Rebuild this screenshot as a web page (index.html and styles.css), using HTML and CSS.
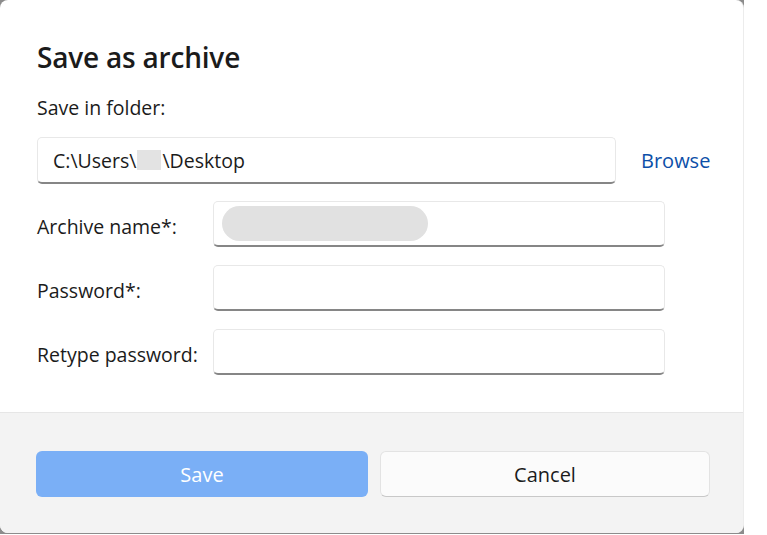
FILE: index.html
```html
<!DOCTYPE html>
<html>
<head>
<meta charset="utf-8">
<link rel="stylesheet" href="styles.css">
</head>
<body>
<div class="frame">
  <div class="dialog">
    <div class="content">
      <h1 class="title">Save as archive</h1>
      <div class="label-top">Save in folder:</div>
      <div class="folder-row">
        <div class="field folder-field">C:\Users\<span class="redact"></span>\Desktop</div>
        <a class="browse">Browse</a>
      </div>
      <div class="form-grid">
        <div class="label">Archive name*:</div>
        <div class="field"><span class="pill"></span></div>
        <div class="label">Password*:</div>
        <div class="field"></div>
        <div class="label">Retype password:</div>
        <div class="field"></div>
      </div>
    </div>
    <div class="footer">
      <button class="btn primary">Save</button>
      <button class="btn secondary">Cancel</button>
    </div>
  </div>
</div>
</body>
</html>
```
FILE: styles.css
```css
html, body {
  margin: 0;
  padding: 0;
  background: #ffffff;
}
body {
  font-family: "Open Sans", "Noto Sans", sans-serif;
  color: #1b1b1b;
}
.frame {
  width: 744px;
  height: 534px;
  background: #8c8c8c;
}
.dialog {
  box-sizing: border-box;
  width: 744px;
  height: 533px;
  background: #ffffff;
  border-radius: 8px;
  border-right: 1px solid #ececec;
  overflow: hidden;
  display: flex;
  flex-direction: column;
}
.content {
  flex: 1;
  padding: 0 0 0 37px;
  border-bottom: 1px solid #e6e6e6;
}
.title {
  margin: 39px 0 0 0;
  font-size: 28px;
  font-weight: 600;
  line-height: 36px;
  letter-spacing: -0.2px;
}
.label-top {
  margin-top: 20px;
  font-size: 19.5px;
  line-height: 26px;
}
.folder-row {
  margin-top: 16px;
  display: flex;
  align-items: center;
}
.field {
  box-sizing: border-box;
  height: 46px;
  background: #fff;
  border: 1px solid #e8e8e8;
  border-bottom: 2px solid #868686;
  border-radius: 5px;
  display: flex;
  align-items: center;
  font-size: 19.5px;
  padding-left: 15px;
}
.folder-field {
  width: 579px;
  height: 47px;
}
.redact {
  display: inline-block;
  width: 24px;
  height: 20px;
  background: #e3e3e3;
  margin: 0 1px;
}
.browse {
  margin-left: 25px;
  color: #0c4fa8;
  font-size: 20px;
}
.form-grid {
  margin-top: 17px;
  display: grid;
  grid-template-columns: 176px 452px;
  row-gap: 18px;
  align-items: center;
}
.label {
  font-size: 19.5px;
  padding-top: 5px;
}
.form-grid .field {
  padding-left: 8px;
}
.pill {
  display: block;
  width: 206px;
  height: 35px;
  border-radius: 18px;
  background: #e1e1e1;
}
.footer {
  height: 120px;
  background: #f3f3f3;
  display: flex;
  gap: 12px;
  padding: 38px 0 0 36px;
  box-sizing: border-box;
}
.btn {
  box-sizing: border-box;
  width: 332px;
  height: 46px;
  border-radius: 6px;
  font-family: inherit;
  font-size: 20px;
}
.primary {
  background: #7aaff6;
  color: #ffffff;
  border: none;
}
.secondary {
  width: 330px;
  background: #fbfbfb;
  color: #1b1b1b;
  border: 1px solid #e3e3e3;
  border-bottom: 1px solid #c8c8c8;
}
```
